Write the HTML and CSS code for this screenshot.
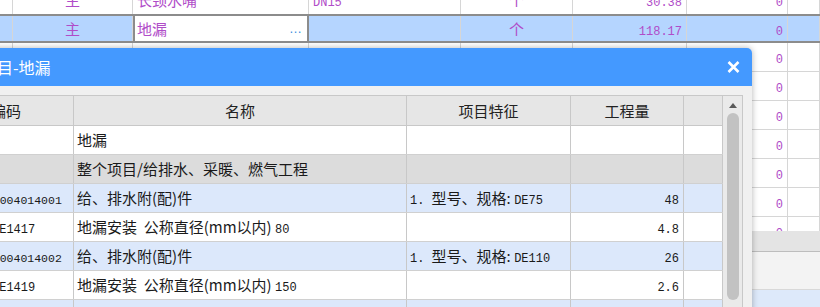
FILE: index.html
```html
<!DOCTYPE html>
<html lang="zh-CN">
<head>
  <meta charset="UTF-8">
  <title>清单项目-地漏</title>
  <link rel="stylesheet" href="styles.css">
</head>
<body>
  <!-- 底层工程量表 -->
  <div class="sheet">
    <div class="srow first">
      <div></div><div class="c">主</div><div>长颈水嘴</div><div><span class="n">DN15</span></div>
      <div class="c">个</div><div class="r"><span class="n">30.38</span></div><div class="r"><span class="n">0</span></div><div></div>
    </div>
    <div class="srow sel">
      <div></div><div class="c">主</div>
      <div class="edit"><span>地漏</span><span class="dots">…</span></div>
      <div></div><div class="c">个</div><div class="r"><span class="n">118.17</span></div><div class="r"><span class="n">0</span></div><div></div>
    </div>
    <div class="srow"><div></div><div></div><div></div><div></div><div></div><div></div><div class="r"><span class="n">0</span></div><div></div></div>
    <div class="srow"><div></div><div></div><div></div><div></div><div></div><div></div><div class="r"><span class="n">0</span></div><div></div></div>
    <div class="srow"><div></div><div></div><div></div><div></div><div></div><div></div><div class="r"><span class="n">0</span></div><div></div></div>
    <div class="srow"><div></div><div></div><div></div><div></div><div></div><div></div><div class="r"><span class="n">0</span></div><div></div></div>
    <div class="srow"><div></div><div></div><div></div><div></div><div></div><div></div><div class="r"><span class="n">0</span></div><div></div></div>
    <div class="srow"><div></div><div></div><div></div><div></div><div></div><div></div><div class="r"><span class="n">0</span></div><div></div></div>
    <div class="srow"><div></div><div></div><div></div><div></div><div></div><div></div><div class="r"><span class="n">0</span></div><div></div></div>
  </div>
  <div class="band"></div>
  <div class="pane"></div>
  <div class="pick"></div>

  <!-- 弹窗 -->
  <div class="dlg">
    <div class="dlg-title">
      <span>清单项目-地漏</span>
      <svg width="13" height="12" viewBox="0 0 13 12">
        <path d="M1.5 1 L11.5 11 M11.5 1 L1.5 11" stroke="#fff" stroke-width="2.6" fill="none"/>
      </svg>
    </div>
    <div class="dlg-body">
      <div class="grid">
        <div class="rows">
          <div class="trow thead">
            <div class="hcode">编码</div><div>名称</div><div>项目特征</div><div>工程量</div><div></div>
          </div>
          <div class="trow w">
            <div></div><div>地漏</div><div></div><div></div><div></div>
          </div>
          <div class="trow g">
            <div></div><div>整个项目/给排水、采暖、燃气工程</div><div></div><div></div><div></div>
          </div>
          <div class="trow b">
            <div class="code"><span class="n">031004014001</span></div>
            <div>给、排水附(配)件</div>
            <div><span class="n">1.&nbsp;</span>型号、规格: <span class="n">DE75</span></div>
            <div class="q"><span class="n">48</span></div><div></div>
          </div>
          <div class="trow w">
            <div class="qcode"><span class="n">CE1417</span></div>
            <div>地漏安装&nbsp; 公称直径(mm以内) <span class="n">80</span></div>
            <div></div>
            <div class="q"><span class="n">4.8</span></div><div></div>
          </div>
          <div class="trow b">
            <div class="code"><span class="n">031004014002</span></div>
            <div>给、排水附(配)件</div>
            <div><span class="n">1.&nbsp;</span>型号、规格: <span class="n">DE110</span></div>
            <div class="q"><span class="n">26</span></div><div></div>
          </div>
          <div class="trow w">
            <div class="qcode"><span class="n">CE1419</span></div>
            <div>地漏安装&nbsp; 公称直径(mm以内) <span class="n">150</span></div>
            <div></div>
            <div class="q"><span class="n">2.6</span></div><div></div>
          </div>
          <div class="trow b">
            <div class="code"><span class="n">031004014003</span></div>
            <div>给、排水附(配)件</div>
            <div><span class="n">1.&nbsp;</span>型号、规格: <span class="n">DE160</span></div>
            <div class="q"><span class="n">16</span></div><div></div>
          </div>
        </div>
        <div class="vscroll">
          <div class="up"></div>
          <div class="thumb"></div>
        </div>
      </div>
    </div>
  </div>
</body>
</html>
```

FILE: styles.css
```css
* {
  box-sizing: border-box;
}
body {
  margin: 0;
  width: 820px;
  height: 307px;
  overflow: hidden;
  position: relative;
  background: #fff;
  font-family: "Noto Sans CJK SC", sans-serif;
  font-size: 15px;
  color: #1a1a1a;
}
.n {
  font-family: "Liberation Mono", monospace;
  font-size: 12px;
}

/* 底层表格 */
.sheet {
  height: 245px;
  margin-top: -14px;
  overflow: hidden;
  color: #b04cc8;
}
.srow {
  display: grid;
  grid-template-columns: 13px 120px 176px 152px 112px 114px 101px 1fr;
  height: 29px;
  line-height: 28px;
  border-bottom: 1px solid #d6d6d6;
}
.srow > div {
  border-right: 1px solid #d6d6d6;
  padding: 0 4px;
  white-space: nowrap;
  overflow: hidden;
}
.srow.first {
  height: 28px;
  border-bottom: 0;
}
.srow.sel {
  background: #b5d5ff;
  line-height: 25px;
  border-top: 2px solid #8c8c8c;
  border-bottom: 2px solid #8c8c8c;
}
.c {
  text-align: center;
}
.r {
  text-align: right;
}
.srow > .edit {
  display: flex;
  justify-content: space-between;
  background: #fff;
  border-left: 2px solid #8c8c8c;
  border-right: 2px solid #8c8c8c;
  padding: 0 5px 0 2px;
}
.dots {
  color: #3d8fe0;
  font-family: "Liberation Sans", sans-serif;
  font-size: 13px;
}
.band {
  height: 21px;
  background: #e4e4e4;
  border-bottom: 1px solid #bdbdbd;
}
.pane {
  height: 38px;
  background: #f3f3f3;
  border-bottom: 1px solid #d8d8d8;
}
.pick {
  height: 30px;
  background: #dde9fa;
}

/* 弹窗 */
.dlg {
  position: absolute;
  top: 48px;
  left: -70px;
  width: 822px;
  height: 280px;
  background: #f0f0f0;
  border-radius: 5px 5px 0 0;
  box-shadow: 0 0 6px rgba(0,0,0,0.3);
  overflow: hidden;
}
.dlg-title {
  height: 38px;
  background: #4499ff;
  color: #fff;
  font-size: 16px;
  display: flex;
  align-items: center;
  justify-content: space-between;
  padding: 0 12px 0 19px;
}
.dlg-body {
  padding: 9px 9px 0 0;
}
.grid {
  display: flex;
  border-top: 1px solid #c8c8c8;
  border-right: 1px solid #c8c8c8;
}
.rows {
  width: 793px;
  flex: none;
}
.trow {
  display: grid;
  grid-template-columns: 144px 333px 164px 113px 39px;
  height: 29px;
  line-height: 28px;
  border-bottom: 1px solid #d0d0d0;
}
.trow > div {
  border-right: 1px solid #c8c8c8;
  padding: 0 3px;
  white-space: nowrap;
  overflow: hidden;
}
.thead {
  height: 30px;
  line-height: 29px;
  background: #e6e6e6;
  border-bottom-color: #c8c8c8;
  color: #222;
}
.thead > div {
  text-align: center;
}
.thead > .hcode {
  padding-left: 12px;
}
.w {
  background: #fff;
}
.g {
  background: #dcdcdc;
}
.b {
  background: #dce8fb;
}
.trow > .code {
  padding-left: 49px;
}
.code .n {
  font-size: 11.5px;
}
.trow > .qcode {
  padding-left: 62px;
}
.trow > .q {
  text-align: right;
  padding-right: 4px;
}
.vscroll {
  width: 19px;
  background: #eaeaea;
  display: flex;
  flex-direction: column;
  align-items: center;
  padding-top: 7px;
}
.up {
  border-left: 4px solid transparent;
  border-right: 4px solid transparent;
  border-bottom: 5px solid #5a5a5a;
}
.thumb {
  width: 12px;
  height: 187px;
  margin-top: 5px;
  background: #c2c2c2;
  border-radius: 6px;
}
```
